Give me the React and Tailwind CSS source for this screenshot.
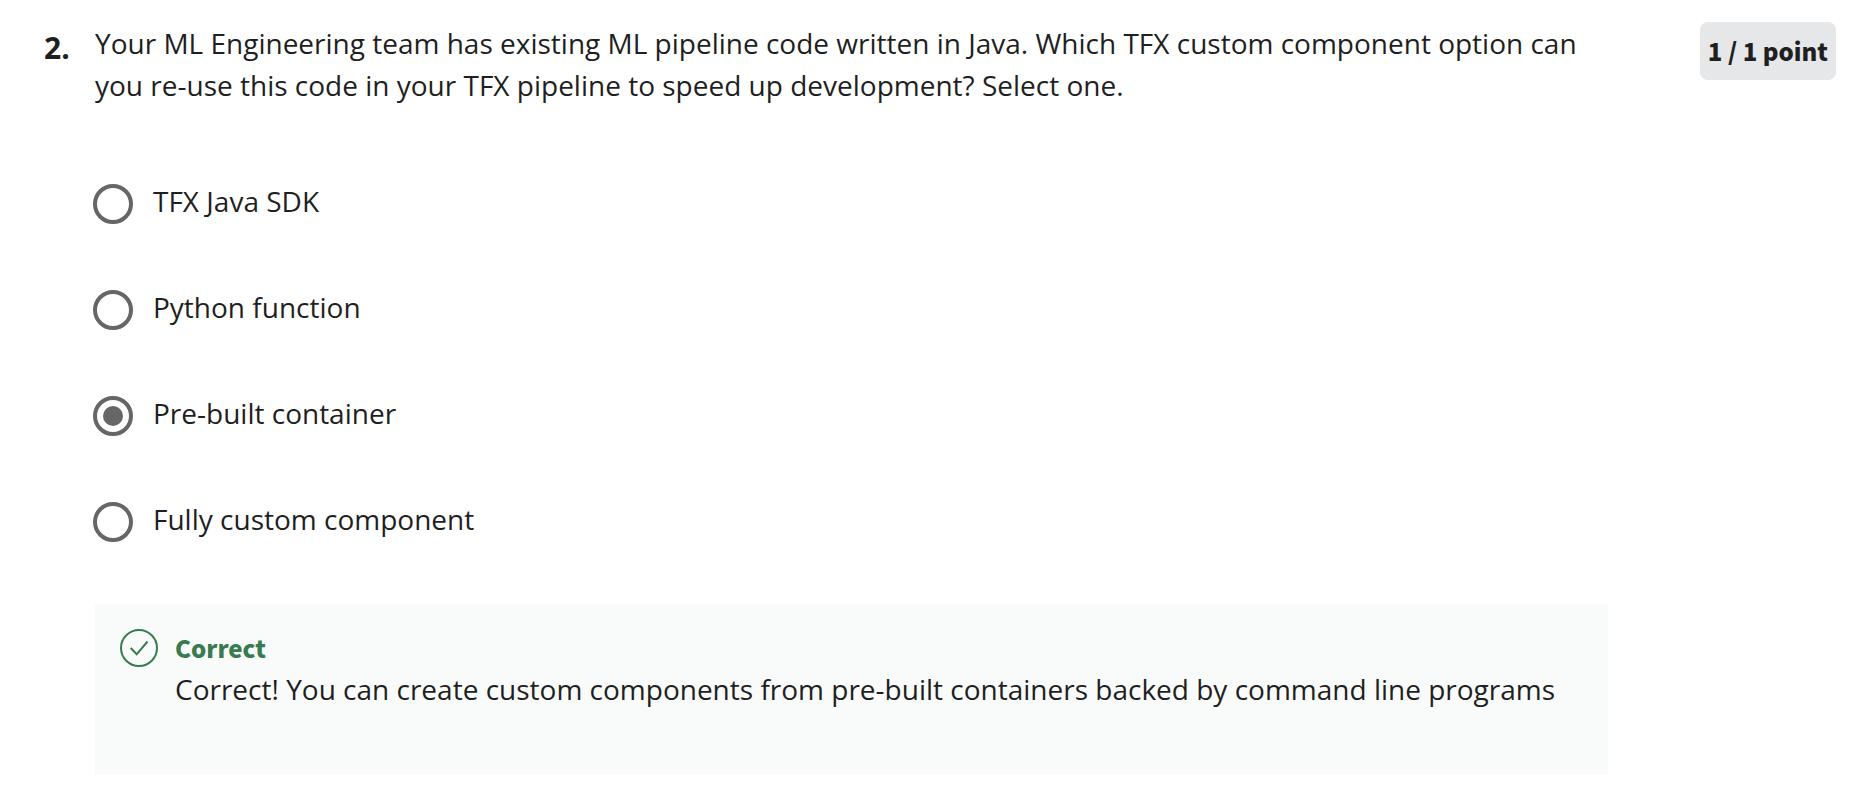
const options = [
  "TFX Java SDK",
  "Python function",
  "Pre-built container",
  "Fully custom component",
];

export default function App() {
  return (
    <main className="flex items-start bg-white pt-[22px] pr-[26px] pl-[44px] font-['Open_Sans',sans-serif] text-[28px] leading-[42px] text-[#1f1f1f]">
      <div className="w-[51px] shrink-0 pt-[5px] text-[30px] font-bold">2.</div>
      <div className="w-full max-w-[1513px]">
        <fieldset>
          <legend className="pr-6">
            Your ML Engineering team has existing ML pipeline code written in Java. Which TFX custom component option can you re-use this code in your TFX pipeline to speed up development? Select one.
          </legend>
          <div className="-ml-0.5 flex flex-col gap-[62px] pt-[74px]">
            {options.map((option) => (
              <label key={option} className="flex items-start gap-5">
                <input
                  type="radio"
                  name="answer"
                  defaultChecked={option === "Pre-built container"}
                  className="mt-1 grid size-10 shrink-0 appearance-none place-items-center rounded-full border-4 border-[#666666] bg-white checked:before:size-5 checked:before:rounded-full checked:before:bg-[#666666] checked:before:content-['']"
                />
                <span>{option}</span>
              </label>
            ))}
          </div>
        </fieldset>
        <section className="mt-[62px] flex gap-4 bg-[#f9fbfa] px-6 pt-6 pb-16">
          <svg className="size-10 shrink-0" viewBox="0 0 40 40" fill="none" stroke="#387b50" strokeWidth="2" aria-hidden="true">
            <circle cx="20" cy="20" r="18" />
            <path d="M11.7 20l6 6.3 10.8-12.8" />
          </svg>
          <div>
            <h2 className="font-['Noto_Sans_CJK_SC',sans-serif] text-[24px] leading-10 font-black text-[#387b50]">Correct</h2>
            <p>Correct! You can create custom components from pre-built containers backed by command line programs</p>
          </div>
        </section>
      </div>
      <div className="ml-auto shrink-0 rounded-lg bg-[#e5e7e8] p-2 font-['Noto_Sans_CJK_SC',sans-serif] text-[24px] font-black">1 / 1 point</div>
    </main>
  );
}
